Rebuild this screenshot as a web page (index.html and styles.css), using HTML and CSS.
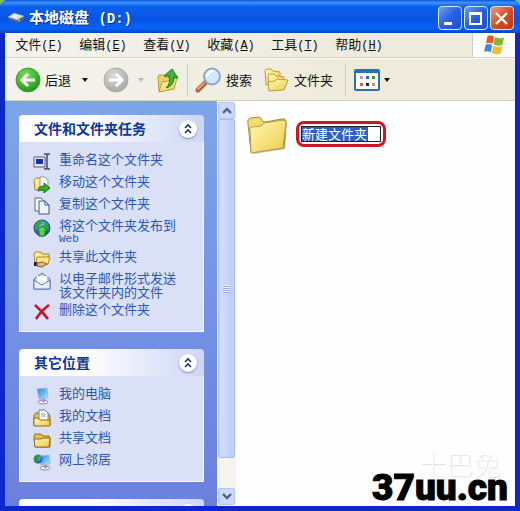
FILE: index.html
```html
<!DOCTYPE html>
<html lang="zh-CN">
<head>
  <meta charset="UTF-8">
  <title>本地磁盘 (D:)</title>
  <link rel="stylesheet" href="styles.css">
</head>
<body>

  <svg class="defs" width="0" height="0" aria-hidden="true">
    <defs>
      <linearGradient id="gFolder" x1="0" y1="0" x2="1" y2="1">
        <stop offset="0" stop-color="#fffbb8"/><stop offset="1" stop-color="#efc94a"/>
      </linearGradient>
      <radialGradient id="gGreen" cx=".4" cy=".3" r=".75">
        <stop offset="0" stop-color="#7fdb63"/><stop offset=".6" stop-color="#3fb52f"/><stop offset="1" stop-color="#1c8a1d"/>
      </radialGradient>
      <radialGradient id="gGrey" cx=".4" cy=".3" r=".75">
        <stop offset="0" stop-color="#dcdcda"/><stop offset="1" stop-color="#a5a5a3"/>
      </radialGradient>
      <radialGradient id="gGlobe" cx=".4" cy=".3" r=".75">
        <stop offset="0" stop-color="#7fc4ff"/><stop offset="1" stop-color="#0f4aa8"/>
      </radialGradient>
      <linearGradient id="gScreen" x1="0" y1="0" x2="1" y2="1">
        <stop offset="0" stop-color="#2380dc"/><stop offset="1" stop-color="#a8ecff"/>
      </linearGradient>
    </defs>
  </svg>

  <div class="window">
    <header class="titlebar">
      <svg class="drive" width="18" height="12" viewBox="0 0 18 12">
        <path d="M1 5l6-4 10 3v4l-7 3-9-4z" fill="#5b6470"/>
        <path d="M1 5l6-4 10 3-7 4z" fill="#d7dde5"/>
        <path d="M5 4l3-1 3 1-3 1z" fill="#fff"/>
        <circle cx="12" cy="8.500" r="1" fill="#5fd0ff"/>
      </svg>
      <h1>本地磁盘 <span class="latin">(D:)</span></h1>
      <div class="win-buttons">
        <button class="win-btn" aria-label="最小化"><svg width="21" height="21" viewBox="0 0 21 21"><path d="M5 14h8v3H5z" fill="#fff"/></svg></button>
        <button class="win-btn" aria-label="最大化"><svg width="21" height="21" viewBox="0 0 21 21"><path d="M4 4h13v13H4z M6 7v8h9V7z" fill="#fff" fill-rule="evenodd"/></svg></button>
        <button class="win-btn close" aria-label="关闭"><svg width="21" height="21" viewBox="0 0 21 21"><path d="M5 5l11 11M16 5L5 16" stroke="#fff" stroke-width="2.400"/></svg></button>
      </div>
    </header>

    <div class="client">
      <nav class="menubar">
        <button class="menu">文件<span>(<u>F</u>)</span></button>
        <button class="menu">编辑<span>(<u>E</u>)</span></button>
        <button class="menu">查看<span>(<u>V</u>)</span></button>
        <button class="menu">收藏<span>(<u>A</u>)</span></button>
        <button class="menu">工具<span>(<u>T</u>)</span></button>
        <button class="menu">帮助<span>(<u>H</u>)</span></button>
        <div class="flag">
          <svg width="22" height="20" viewBox="0 0 22 20">
            <path d="M4.500 1q3-1.500 6.500.5L9.500 9Q6 7 3 8.500z" fill="#e8582a"/>
            <path d="M12 2q4 2 9 .5L19.500 10q-5 1.500-9-.5z" fill="#7fb83a"/>
            <path d="M2.700 9.700q3-1.500 6.500.5L7.700 17.500q-3.500-2-6.700-.5z" fill="#3f86dd"/>
            <path d="M10.300 10.700q4 2 9 .5L17.700 18.500q-5 1.500-9-.5z" fill="#f5bd28"/>
          </svg>
        </div>
      </nav>

      <div class="toolbar">
        <button class="tool back">
          <svg width="26" height="26" viewBox="0 0 26 26">
            <circle cx="13" cy="13" r="12" fill="url(#gGreen)" stroke="#4d9a4a"/>
            <path d="M20 13H8M13 7l-6 6 6 6" fill="none" stroke="#fff" stroke-width="3"/>
          </svg>
          后退
          <i class="caret"></i>
        </button>
        <button class="tool forward" aria-label="前进" disabled>
          <svg width="26" height="26" viewBox="0 0 26 26">
            <circle cx="13" cy="13" r="12" fill="url(#gGrey)" stroke="#a9a9a7"/>
            <path d="M6 13h12M13 7l6 6-6 6" fill="none" stroke="#fff" stroke-width="3"/>
          </svg>
          <i class="caret"></i>
        </button>
        <button class="tool up" aria-label="向上">
          <svg width="24" height="26" viewBox="0 0 24 26">
            <path d="M2 10l1-2h5l1 2h9v11L3 24z" fill="#f0d060" stroke="#b99a38"/>
            <path d="M3 25l3-10 6-1 2-2 7-1-3 11z" fill="url(#gFolder)" stroke="#c09a30"/>
            <path d="M10 21q5-4 3-12H8l8-7 6 9-4-1q0 9-8 11z" fill="#3bb53a" stroke="#187c20"/>
          </svg>
        </button>
        <i class="divider"></i>
        <button class="tool search">
          <svg width="27" height="26" viewBox="0 0 27 26">
            <path d="M10 16l-7 7" stroke="#a8643a" stroke-width="5" stroke-linecap="round"/>
            <path d="M9 16l-6 6" stroke="#e9a36d" stroke-width="2" stroke-linecap="round"/>
            <circle cx="17" cy="9.500" r="8" fill="#cfeafc" stroke="#8ba6c9" stroke-width="2"/>
            <path d="M12 9q1-5 6-5" fill="none" stroke="#fff" stroke-width="2.500" stroke-linecap="round"/>
          </svg>
          搜索
        </button>
        <button class="tool folders">
          <svg width="25" height="24" viewBox="0 0 25 24">
            <path d="M1 3l1-2h5l2 2 7 1v11L2 17z" fill="url(#gFolder)" stroke="#c59c2c"/>
            <path d="M4 8l1-2h5l2 2 8 1v10L5 22z" fill="url(#gFolder)" stroke="#c59c2c"/>
            <path d="M5 23L4 14l7-1 2-2 11 1-4 10z" fill="url(#gFolder)" stroke="#c59c2c"/>
          </svg>
          文件夹
        </button>
        <i class="divider"></i>
        <button class="tool views" aria-label="查看">
          <svg width="26" height="22" viewBox="0 0 26 22">
            <rect x="1" y="1" width="24" height="20" rx="1" fill="#fff" stroke="#2a6fb8" stroke-width="2"/>
            <path d="M1 1h24v3H1z" fill="#2a6fb8"/>
            <path d="M6 7h3v3H6z" fill="#a59bc8"/><path d="M12 7h3v3h-3z" fill="#3568c0"/><path d="M18 7h3v3h-3z" fill="#3f9a3c"/>
            <path d="M6 14h3v3H6z" fill="#e0603c"/><path d="M12 14h3v3h-3z" fill="#20206c"/><path d="M18 14h3v3h-3z" fill="#cfa832"/>
          </svg>
          <i class="caret"></i>
        </button>
      </div>

      <div class="body">
        <aside class="sidebar">
          <section class="panel">
            <div class="panel-head">
              <h2>文件和文件夹任务</h2>
              <button class="fold" aria-label="折叠"><svg width="18" height="18" viewBox="0 0 18 18"><path d="M6 8l3-3 3 3M6 13l3-3 3 3" fill="none" stroke="#1c3275" stroke-width="1.600"/></svg></button>
            </div>
            <ul class="links">
              <li><svg width="18" height="18" viewBox="0 0 18 18"><path d="M1 4h11v10H1z" fill="#e6e6f0" stroke="#55597c"/><path d="M3 6h7v5H3z" fill="#1d2f9c"/><path d="M11 1h2l1 1 1-1h2M14 2v13M11 16h2l1-1 1 1h2" fill="none" stroke="#444a66" stroke-width="1.500"/></svg><a href="#">重命名这个文件夹</a></li>
              <li><svg width="18" height="18" viewBox="0 0 18 18"><path d="M1 5l2-2h5l1 2h5v10H2z" fill="url(#gFolder)" stroke="#b3862a"/><path d="M7 2h5l3 3v7H7z" fill="#fff" stroke="#99a"/><path d="M5 16q0-5 6-5V8l6 5-6 5v-3q-3 0-6 1z" fill="#37ae31" stroke="#14701d"/></svg><a href="#">移动这个文件夹</a></li>
              <li><svg width="18" height="18" viewBox="0 0 18 18"><path d="M2 1h6l3 3v10H2z" fill="#fff" stroke="#53698f"/><path d="M6 4h6l4 4v9H6z" fill="#eef4ff" stroke="#3f5680"/><path d="M12 4v4h4" fill="none" stroke="#3f5680"/></svg><a href="#">复制这个文件夹</a></li>
              <li><svg width="18" height="18" viewBox="0 0 18 18"><circle cx="9" cy="9" r="8" fill="url(#gGlobe)" stroke="#17508c"/><path d="M2 6q3-5 7-5 1 4-2 5-1 4-5 4zM12 3q4 2 4 7l-3 1-2-4z" fill="#36a53b"/><path d="M9 7l6 5h-3v5H6v-5H3z" fill="#5fd052" stroke="#187021"/></svg><a href="#">将这个文件夹发布到<br><span class="latin">Web</span></a></li>
              <li><svg width="18" height="18" viewBox="0 0 18 18"><path d="M1 4l1-2h6l1 2h7l-1 10H2z" fill="url(#gFolder)" stroke="#b3862a"/><path d="M4 7h13l-2 7H3z" fill="#fce98a" stroke="#b3862a"/><path d="M1 12h3v4H1z" fill="#222"/><path d="M4 13l6-1 4 2-5 3-5-1z" fill="#eeb27a" stroke="#8a5526"/></svg><a href="#">共享此文件夹</a></li>
              <li><svg width="18" height="18" viewBox="0 0 18 18"><path d="M1 7l8-6 8 6v10H1z" fill="#b9cdef" stroke="#6078ac"/><path d="M4 4h10v8H4z" fill="#fff"/><path d="M1 8l8 5 8-5v9H1z" fill="#e7effd" stroke="#6078ac"/></svg><a href="#">以电子邮件形式发送<br>该文件夹内的文件</a></li>
              <li><svg width="18" height="18" viewBox="0 0 18 18"><path d="M2 2q7 6 13 14M16 2Q8 8 3 16" fill="none" stroke="#c41230" stroke-width="2.600"/></svg><a href="#">删除这个文件夹</a></li>
            </ul>
          </section>

          <section class="panel">
            <div class="panel-head">
              <h2>其它位置</h2>
              <button class="fold" aria-label="折叠"><svg width="18" height="18" viewBox="0 0 18 18"><path d="M6 8l3-3 3 3M6 13l3-3 3 3" fill="none" stroke="#1c3275" stroke-width="1.600"/></svg></button>
            </div>
            <ul class="links">
              <li><svg width="18" height="18" viewBox="0 0 18 18"><path d="M4 2l10-1 1 10-9 1z" fill="url(#gScreen)" stroke="#a9b9d6"/><ellipse cx="10" cy="15" rx="5" ry="2" fill="#f1effa" stroke="#8d86b4"/><path d="M9 12h3v3H9z" fill="#9a94c0"/></svg><a href="#">我的电脑</a></li>
              <li><svg width="18" height="18" viewBox="0 0 18 18"><path d="M1 6l2-2h12l2 3v9H1z" fill="#eebf3f" stroke="#8f6820"/><path d="M6 1h6l3 3v8H6z" fill="#fff" stroke="#6e86a8"/><path d="M8 5h4M8 7h5" stroke="#6fa8d8"/><path d="M1 9h4l2 2h10v6H1z" fill="url(#gFolder)" stroke="#8f6820"/></svg><a href="#">我的文档</a></li>
              <li><svg width="18" height="18" viewBox="0 0 18 18"><path d="M1 5l1-2h6l2 2h6l1 2v9H2z" fill="#eebf3f" stroke="#8f6820"/><path d="M1 8h7l2-1h7l-1 9H2z" fill="url(#gFolder)" stroke="#8f6820"/></svg><a href="#">共享文档</a></li>
              <li><svg width="18" height="18" viewBox="0 0 18 18"><path d="M6 3l10-1 1 9-9 1z" fill="url(#gScreen)" stroke="#a9b9d6"/><ellipse cx="12" cy="15" rx="5" ry="2" fill="#f1effa" stroke="#8d86b4"/><path d="M11 12h3v3h-3z" fill="#9a94c0"/><circle cx="5" cy="6" r="4.500" fill="url(#gGlobe)"/><path d="M1 5q2-4 6-3l-2 4-1 4q-3-1-3-5z" fill="#249a36"/></svg><a href="#">网上邻居</a></li>
            </ul>
          </section>

          <section class="panel">
            <div class="panel-head">
              <h2></h2>
              <button class="fold" aria-label="折叠"></button>
            </div>
          </section>
        </aside>

        <div class="scrollbar">
          <button class="scroll-btn" aria-label="向上滚动"><svg width="10" height="7" viewBox="0 0 10 7"><path d="M1 6l4-4 4 4" fill="none" stroke="#4d6185" stroke-width="2.400"/></svg></button>
          <div class="thumb"><i class="grip"></i></div>
          <button class="scroll-btn" aria-label="向下滚动"><svg width="10" height="7" viewBox="0 0 10 7"><path d="M1 1l4 4 4-4" fill="none" stroke="#4d6185" stroke-width="2.400"/></svg></button>
        </div>

        <main class="files">
          <div class="file">
            <svg width="42" height="40" viewBox="0 0 42 40">
              <path d="M5 36l3 3 31-5 2-26-2-2z" fill="#8a8a80" opacity=".5"/>
              <path d="M2 9q-1-6 3-6l8-1q2 0 3 4l3 1 17-3q4-1 4 3l-2 26-33 4z" fill="#f3dc6d" stroke="#a58a3a"/>
              <path d="M4 14q0-2 2-2l9-1 3-3 19-3q3 0 3 3l-3 25-32 5z" fill="url(#gFolder)" stroke="#b59a44"/>
            </svg>
            <label class="rename"><input type="text" value="新建文件夹" aria-label="名称"></label>
          </div>
        </main>
      </div>
    </div>

    <div class="mark faint">十巴兔</div>
    <div class="mark site">37uu.cn</div>
  </div>

</body>
</html>
```

FILE: styles.css
```css
:root {
  --face: #eeebdc;
  --link: #2a57b5;
  --navy: #10369c;
  --frame: #0a28cc;
}

* {
  box-sizing: border-box;
}

body {
  margin: 0;
  background: #7fbf5a;
  color: #111;
  font-family: "Noto Sans CJK SC", sans-serif;
  font-size: 13px;
}

button {
  margin: 0;
  padding: 0;
  border: 0;
  background: none;
  color: inherit;
  font: inherit;
}

svg {
  display: block;
  flex: none;
}

.defs {
  position: absolute;
}

.latin {
  font-family: "Liberation Mono", monospace;
}

.window {
  position: relative;
  display: flex;
  flex-direction: column;
  height: 100vh;
  padding: 0 5px 5px;
  border-radius: 8px 8px 0 0;
  background: var(--frame);
  overflow: hidden;
}

/* title bar */
.titlebar {
  display: flex;
  align-items: center;
  flex: none;
  height: 33px;
  margin: 0 -5px;
  padding: 3px 6px 0 7px;
  background: linear-gradient(#0a56d8, #3b93ff 8%, #0a60ea 20%, #0555e4 60%, #0663fa 85%, #0347c4);
}

.titlebar h1 {
  flex: 1;
  margin: 0 0 0 4px;
  color: #fff;
  font-size: 15px;
  line-height: 20px;
  text-shadow: 1px 1px #0a2f80;
}

.titlebar .latin {
  margin-left: 6px;
  font-size: 14px;
}

.win-buttons {
  display: flex;
  gap: 2px;
}

.win-btn {
  width: 24px;
  height: 24px;
  border: 1px solid #dfe8ff;
  border-radius: 4px;
  background: linear-gradient(135deg, #6f9cf5, #2660e0 50%, #1c50cc);
}

.win-btn.close {
  background: linear-gradient(135deg, #f09a80, #db4c28 50%, #bf3412);
}

/* menu and tools */
.client {
  display: flex;
  flex: 1;
  flex-direction: column;
  min-height: 0;
  background: linear-gradient(90deg, #f4f3ec, var(--face) 70%);
}

.menubar {
  display: flex;
  flex: none;
  gap: 16px;
  height: 25px;
  padding-left: 10px;
  border-bottom: 1px solid #d4d0bf;
}

.menu {
  width: 48px;
  padding-bottom: 3px;
  white-space: nowrap;
}

.menu span {
  font-family: "Liberation Mono", monospace;
  font-size: 12px;
}

.flag {
  display: flex;
  align-items: center;
  justify-content: center;
  width: 43px;
  margin-left: auto;
  border-left: 1px solid #d4d0bf;
  background: #fff;
}

.toolbar {
  display: flex;
  align-items: center;
  flex: none;
  height: 43px;
  padding: 0 10px;
  border-top: 1px solid #fff;
  border-bottom: 1px solid #d2cebb;
}

.tool {
  display: flex;
  align-items: center;
  gap: 4px;
}

.caret {
  border: 3px solid transparent;
  border-top: 4px solid #111;
  border-bottom: 0;
}

.back .caret {
  margin-left: 7px;
}

.forward {
  margin-left: 15px;
}

.forward .caret {
  margin-left: 5px;
  border-top-color: #bbb8aa;
}

.up {
  margin-left: 12px;
}

.divider {
  width: 1px;
  height: 32px;
  margin: 0 7px;
  background: #cfcbb8;
}

.folders {
  gap: 5px;
  margin-left: 12px;
}

.folders + .divider {
  margin: 0 8px 0 12px;
}

/* task pane */
.body {
  display: flex;
  flex: 1;
  min-height: 0;
}

.sidebar {
  display: flex;
  flex: none;
  flex-direction: column;
  gap: 17px;
  width: 212px;
  padding: 14px 13px 0 14px;
  background: linear-gradient(#7da6ea, #6a80dd);
  overflow: hidden;
}

.panel {
  flex: none;
}

.panel-head {
  display: flex;
  align-items: center;
  justify-content: space-between;
  height: 27px;
  padding: 0 7px 0 15px;
  border-radius: 4px 4px 0 0;
  background: linear-gradient(90deg, #fff 35%, #cdd6f6);
}

.panel-head h2 {
  margin: 0;
  padding-bottom: 1px;
  color: var(--navy);
  font-size: 14px;
  line-height: 20px;
}

.fold {
  width: 18px;
  height: 18px;
  border-radius: 50%;
  background: #fff;
  box-shadow: 0 1px 2px #8590b8;
}

.links {
  display: flex;
  flex-direction: column;
  gap: 3px;
  margin: 0;
  padding: 10px 13px;
  border: 1px solid #fff;
  border-top: 0;
  background: #dae0f6;
  list-style: none;
}

.links li {
  display: flex;
  gap: 8px;
  min-height: 19px;
}

.links svg {
  margin-top: 1px;
}

.links a {
  color: var(--link);
  line-height: 14px;
  text-decoration: none;
  white-space: nowrap;
}

.links .latin {
  display: block;
  font-size: 11px;
}

.links br:has(+ .latin) {
  display: none;
}

.scrollbar {
  display: flex;
  flex: none;
  flex-direction: column;
  width: 19px;
  padding: 1px;
  background: #f5f4ee;
}

.scroll-btn {
  display: flex;
  align-items: center;
  justify-content: center;
  flex: none;
  height: 17px;
  border: 1px solid #b3c5f2;
  border-radius: 2px;
  background: #cbdafb;
}

.thumb {
  display: flex;
  align-items: center;
  justify-content: center;
  height: 339px;
  max-height: 87%;
  margin-bottom: auto;
  border: 1px solid #a9bdf0;
  border-radius: 2px;
  background: linear-gradient(90deg, #d3e0fd, #bccdf8);
}

.grip {
  width: 7px;
  height: 8px;
  background: repeating-linear-gradient(#eef3ff 0 1px, #91abe4 1px 2px);
}

/* file list */
.files {
  flex: 1;
  padding: 14px 10px;
  background: #fefefe;
}

.file {
  display: flex;
  align-items: center;
  gap: 8px;
}

.rename {
  margin-bottom: 2px;
  padding: 2px;
  border: 3px solid #d01522;
  border-radius: 8px;
}

.rename input {
  display: block;
  width: 80px;
  height: 16px;
  padding: 0 0 2px;
  border: 1px solid #222;
  background: linear-gradient(#2f5fc0, #2f5fc0) no-repeat 0 0 / 66px 100% #fff;
  color: #fff;
  font: inherit;
  line-height: 12px;
  outline: 0;
}

/* marks laid over the corner */
.mark {
  position: absolute;
  right: 12px;
  line-height: 1;
}

.site {
  bottom: 5px;
  color: #000;
  font-family: Roboto, "Liberation Sans", sans-serif;
  font-size: 37px;
  font-weight: 900;
  -webkit-text-stroke: 1px #000;
}

.faint {
  right: 20px;
  bottom: 34px;
  color: #fff;
  font-size: 27px;
  font-weight: 300;
  text-shadow: 1px 1px 1px #ddd;
}
```
